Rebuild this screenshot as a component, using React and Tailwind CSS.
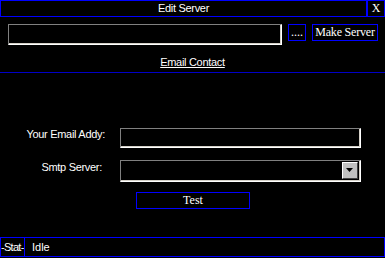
import React from "react";

const sans = { fontFamily: '"Liberation Sans", Arial, sans-serif' };
const serif = { fontFamily: '"Liberation Serif", "Times New Roman", serif' };

function Sunken({ className = "", children }) {
  return (
    <div className={`border-t border-l border-t-[#808080] border-l-[#808080] border-b border-r border-b-white border-r-white ${className}`}>
      <div className="w-full h-full border-b border-r border-b-[#d4d0c8] border-r-[#d4d0c8]">{children}</div>
    </div>
  );
}

export default function App() {
  return (
    <div className="w-[385px] h-[258px] bg-black text-white flex flex-col overflow-hidden" style={sans}>
      <div className="flex h-[17px] shrink-0">
        <div className="w-[367px] h-[17px] border border-[#0000ff] flex items-center justify-center text-[11px] tracking-[-0.3px] leading-[15px]">
          Edit Server
        </div>
        <div className="w-[18px] h-[17px] border border-[#0000ff] flex items-center justify-center text-[12px] leading-[15px]" style={serif}>
          X
        </div>
      </div>

      <div className="mt-[7px] flex items-start pl-[8px] h-[21px] shrink-0">
        <Sunken className="w-[274px] h-[21px]" />
        <div className="ml-[6px] w-[18px] h-[17px] border border-[#0000ff] flex items-center justify-center text-[12px] leading-[15px]" style={serif}>
          ....
        </div>
        <div className="ml-[6px] w-[66px] h-[17px] border border-[#0000ff] flex items-center justify-center text-[12px] leading-[15px] tracking-[-0.2px]" style={serif}>
          Make Server
        </div>
      </div>

      <div className="mt-[10px] h-[15px] leading-[15px] text-[11px] tracking-[-0.3px] text-center shrink-0">
        <span className="underline underline-offset-[1px]">Email Contact</span>
      </div>
      <div className="mt-[2px] h-[1px] bg-[#0000c8] shrink-0" />

      <div className="mt-[55px] flex items-start h-[20px] shrink-0">
        <div className="w-[105px] text-right text-[11px] leading-[13px] tracking-[-0.3px]">Your Email Addy:</div>
        <Sunken className="ml-[15px] w-[241px] h-[20px]" />
      </div>

      <div className="mt-[12px] flex items-start h-[22px] shrink-0">
        <div className="w-[102px] mt-[1px] text-right text-[11px] leading-[13px] tracking-[-0.3px]">Smtp Server:</div>
        <Sunken className="ml-[18px] w-[241px] h-[22px]">
          <div className="w-full h-full flex items-center justify-end pr-[1px]">
            <div className="w-[16px] h-[17px] bg-[#c0c0c0] border-t border-l border-t-white border-l-white border-b border-r border-b-[#404040] border-r-[#404040] flex items-center justify-center">
              <svg width="8" height="5" viewBox="0 0 8 5">
                <path d="M0 0 H7 L3.5 4 Z" fill="#000" />
              </svg>
            </div>
          </div>
        </Sunken>
      </div>

      <div className="mt-[10px] ml-[136px] w-[114px] h-[17px] border border-[#0000ff] flex items-center justify-center text-[12px] leading-[15px] shrink-0" style={serif}>
        Test
      </div>

      <div className="mt-auto mb-[1px] flex h-[20px] shrink-0">
        <div className="w-[25px] h-[20px] border border-[#0000ff] overflow-hidden flex items-center text-[11px] leading-[13px] tracking-[-0.7px] whitespace-nowrap">
          -Stat-
        </div>
        <div className="flex-1 h-[20px] border border-l-0 border-[#0000ff] flex items-center pl-[7px] text-[11px] leading-[13px]">
          Idle
        </div>
      </div>
    </div>
  );
}
